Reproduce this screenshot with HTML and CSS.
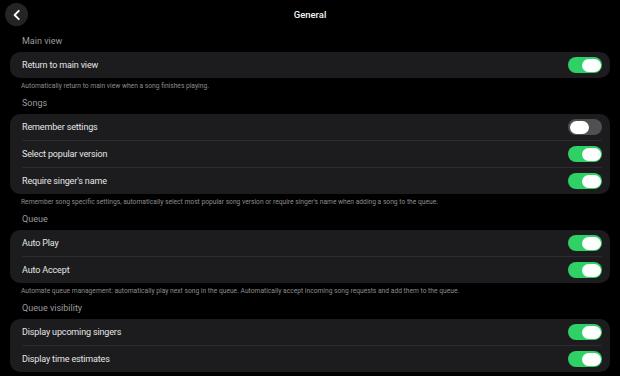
FILE: index.html
```html
<!DOCTYPE html>
<html lang="en">
<head>
  <meta charset="UTF-8">
  <title>General</title>
  <link rel="stylesheet" href="styles.css">
</head>
<body>
  <div class="topbar">
    <button class="back-btn" aria-label="Back">
      <svg width="12" height="12" viewBox="0 0 12 12">
        <path d="M7.8 1.8 L3.6 6 L7.8 10.2" fill="none" stroke="#fff" stroke-width="1.8" stroke-linecap="round" stroke-linejoin="round"/>
      </svg>
    </button>
    <div class="title">General</div>
    <div></div>
  </div>

  <div class="settings">
    <div class="section">
      <div class="section-label">Main view</div>
      <div class="card">
        <div class="row"><span>Return to main view</span><span class="toggle on"></span></div>
      </div>
      <div class="desc">Automatically return to main view when a song finishes playing.</div>
    </div>

    <div class="section">
      <div class="section-label">Songs</div>
      <div class="card">
        <div class="row"><span>Remember settings</span><span class="toggle"></span></div>
        <div class="row"><span>Select popular version</span><span class="toggle on"></span></div>
        <div class="row"><span>Require singer's name</span><span class="toggle on"></span></div>
      </div>
      <div class="desc">Remember song specific settings, automatically select most popular song version or require singer's name when adding a song to the queue.</div>
    </div>

    <div class="section">
      <div class="section-label">Queue</div>
      <div class="card">
        <div class="row"><span>Auto Play</span><span class="toggle on"></span></div>
        <div class="row"><span>Auto Accept</span><span class="toggle on"></span></div>
      </div>
      <div class="desc">Automate queue management: automatically play next song in the queue. Automatically accept incoming song requests and add them to the queue.</div>
    </div>

    <div class="section">
      <div class="section-label">Queue visibility</div>
      <div class="card">
        <div class="row"><span>Display upcoming singers</span><span class="toggle on"></span></div>
        <div class="row"><span>Display time estimates</span><span class="toggle on"></span></div>
      </div>
    </div>
  </div>
</body>
</html>
```

FILE: styles.css
```css
body {
  margin: 0;
  background-color: #000;
  color: #e8e8e8;
  font-family: Roboto, "Noto Sans", sans-serif;
  overflow: hidden;
}
.topbar {
  display: grid;
  grid-template-columns: 40px 1fr 40px;
  align-items: center;
  height: 28px;
  padding: 0 5px;
}
.back-btn {
  width: 23px;
  height: 23px;
  margin-top: 1px;
  border: none;
  border-radius: 50%;
  background-color: #242424;
  display: flex;
  align-items: center;
  justify-content: center;
  padding: 0;
}
.title {
  text-align: center;
  font-size: 9.5px;
  font-weight: 500;
  color: #f2f2f2;
}
.settings {
  padding: 7px 10px 0;
}
.section-label {
  font-size: 9px;
  line-height: 12px;
  color: #9c9c9c;
  padding-left: 12px;
  margin-bottom: 5px;
}
.card {
  background-color: #1c1c1e;
  border-radius: 10px;
  padding: 0 8px 0 12px;
}
.row {
  display: flex;
  justify-content: space-between;
  align-items: center;
  height: 26px;
  font-size: 9px;
  letter-spacing: -0.15px;
  color: #e6e6e6;
  border-top: 1px solid #2c2c2e;
}
.row:first-child {
  border-top: none;
}
.desc {
  font-size: 6.7px;
  line-height: 10px;
  color: #8c8c8c;
  padding-left: 11px;
  margin: 3px 0 6px;
}
.toggle {
  position: relative;
  width: 34px;
  height: 16px;
  border-radius: 8px;
  background-color: #505052;
}
.toggle::after {
  content: "";
  position: absolute;
  top: 1.5px;
  left: 1.5px;
  width: 19px;
  height: 13px;
  border-radius: 7px;
  background-color: #fff;
}
.toggle.on {
  background-color: #2fd065;
}
.toggle.on::after {
  left: auto;
  right: 1.5px;
}
```
